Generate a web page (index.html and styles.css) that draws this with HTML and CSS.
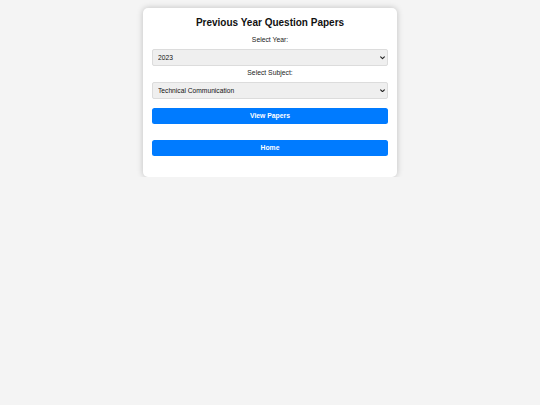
FILE: index.html
```html
<!DOCTYPE html>
<html lang="en">
<head>
<meta charset="utf-8">
<title>Previous Year Question Papers</title>
<link rel="stylesheet" href="styles.css">
</head>
<body>
<div class="card">
  <h2 class="title">Previous Year Question Papers</h2>
  <form class="form">
    <label class="label label-first" for="year">Select Year:</label>
    <div class="select-wrap">
      <select id="year" class="select">
        <option>2023</option>
        <option>2022</option>
        <option>2021</option>
      </select>
      <svg class="chevron" viewBox="0 0 8 5" width="5" height="3.5" aria-hidden="true"><path d="M1 1 L4 4 L7 1" fill="none" stroke="#222" stroke-width="1.8" stroke-linecap="round" stroke-linejoin="round"/></svg>
    </div>
    <label class="label" for="subject">Select Subject:</label>
    <div class="select-wrap">
      <select id="subject" class="select">
        <option>Technical Communication</option>
        <option>Mathematics</option>
      </select>
      <svg class="chevron" viewBox="0 0 8 5" width="5" height="3.5" aria-hidden="true"><path d="M1 1 L4 4 L7 1" fill="none" stroke="#222" stroke-width="1.8" stroke-linecap="round" stroke-linejoin="round"/></svg>
    </div>
    <button type="button" class="btn btn-view">View Papers</button>
    <button type="button" class="btn btn-home">Home</button>
  </form>
</div>
</body>
</html>
```
FILE: styles.css
```css
html, body {
  margin: 0;
  padding: 0;
}
body {
  background: #f4f4f4;
  font-family: "Liberation Sans", Arial, sans-serif;
  font-size: 7px;
  color: #222;
  padding-top: 8px;
}
.card {
  width: 254px;
  box-sizing: border-box;
  margin: 0 auto;
  background: #fff;
  border-radius: 5px;
  box-shadow: 0 0 6px rgba(0, 0, 0, 0.22);
  padding: 9px 9px 21px;
}
.title {
  margin: 0;
  font-size: 10px;
  line-height: 12px;
  font-weight: bold;
  text-align: center;
  color: #111;
}
.form {
  display: flex;
  flex-direction: column;
}
.label {
  display: block;
  text-align: center;
  font-size: 6.8px;
  line-height: 8px;
  margin: 2.6px 0 5.4px;
  color: #222;
}
.label-first {
  margin-top: 7px;
  margin-bottom: 5px;
}
.select-wrap {
  position: relative;
}
.select {
  display: block;
  width: 100%;
  height: 17px;
  box-sizing: border-box;
  -webkit-appearance: none;
  appearance: none;
  background: #efefef;
  border: 1px solid #dcdcdc;
  border-radius: 2px;
  padding: 0 12px 0 5px;
  font-family: "Liberation Sans", Arial, sans-serif;
  font-size: 6.7px;
  color: #111;
  margin: 0;
}
.chevron {
  position: absolute;
  right: 3px;
  top: 7px;
  pointer-events: none;
}
.btn {
  display: block;
  width: 100%;
  height: 16px;
  box-sizing: border-box;
  border: none;
  border-radius: 2.5px;
  background: #007bff;
  color: #fff;
  font-family: "Liberation Sans", Arial, sans-serif;
  font-size: 6.8px;
  font-weight: bold;
  padding: 0;
  margin: 0;
}
.btn-view {
  margin-top: 9px;
}
.btn-home {
  margin-top: 16px;
}
```
